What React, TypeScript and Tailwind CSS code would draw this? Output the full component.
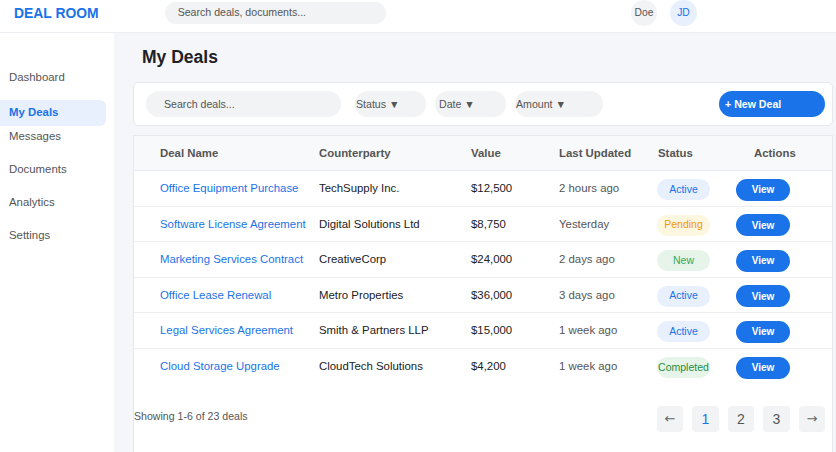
import React from "react";

type Row = { name: string; cp: string; value: string; updated: string; status: "Active" | "Pending" | "New" | "Completed" };

const rows: Row[] = [
  { name: "Office Equipment Purchase", cp: "TechSupply Inc.", value: "$12,500", updated: "2 hours ago", status: "Active" },
  { name: "Software License Agreement", cp: "Digital Solutions Ltd", value: "$8,750", updated: "Yesterday", status: "Pending" },
  { name: "Marketing Services Contract", cp: "CreativeCorp", value: "$24,000", updated: "2 days ago", status: "New" },
  { name: "Office Lease Renewal", cp: "Metro Properties", value: "$36,000", updated: "3 days ago", status: "Active" },
  { name: "Legal Services Agreement", cp: "Smith & Partners LLP", value: "$15,000", updated: "1 week ago", status: "Active" },
  { name: "Cloud Storage Upgrade", cp: "CloudTech Solutions", value: "$4,200", updated: "1 week ago", status: "Completed" },
];

function Badge({ status }: { status: Row["status"] }) {
  const cls =
    status === "Active"
      ? "bg-[#e8f0fe] text-[#1a73e8]"
      : status === "Pending"
      ? "bg-[#fef7e0] text-[#f29900]"
      : status === "New"
      ? "bg-[#e6f4ea] text-[#34a853]"
      : "bg-[#e6f4ea] text-[#1e8e3e]";
  return (
    <span className={`mt-[3px] inline-flex h-[21px] w-[53px] items-center justify-center whitespace-nowrap rounded-full text-[10.5px] ${cls}`}>
      {status}
    </span>
  );
}

export default function App() {
  const nav = ["Dashboard", "My Deals", "Messages", "Documents", "Analytics", "Settings"];
  return (
    <div className="min-h-screen w-[836px] bg-white text-[#202124]" style={{ fontFamily: '"Liberation Sans", Arial, sans-serif' }}>
      {/* Header */}
      <div className="border-b border-[#eceef1] pb-[6px]">
        <div className="flex h-[26px] items-center pl-[14px] pr-[139px]">
          <div className="text-[13.9px] font-bold text-[#1a73e8]">DEAL ROOM</div>
          <div className="ml-[66px] flex h-[22px] w-[221px] items-center rounded-full bg-[#f1f3f4] pl-[13px] text-[10.6px] text-[#555]">
            Search deals, documents...
          </div>
          <div className="ml-auto flex items-center gap-[13px]">
            <div className="flex h-[26px] w-[26px] items-center justify-center rounded-full bg-[#f1f3f4] text-[10.3px] text-[#555]">Doe</div>
            <div className="flex h-[26px] w-[27px] items-center justify-center rounded-full bg-[#e8f0fe] text-[10.3px] text-[#1a73e8]">JD</div>
          </div>
        </div>
      </div>

      <div className="flex min-h-[420px]">
        {/* Sidebar */}
        <div className="w-[114px] shrink-0 bg-white pr-[8px] pt-[34px]">
          {nav.map((n) => {
            const active = n === "My Deals";
            return active ? (
              <div key={n} className="flex h-[26px] items-center rounded-r-[6px] bg-[#e8f0fe] pl-[9px] text-[11.4px] font-bold text-[#1a73e8]">
                {n}
              </div>
            ) : (
              <div key={n} className="mb-[13px] flex h-[20px] items-center pl-[9px] pt-[2px] text-[11.4px] text-[#555]">
                {n}
              </div>
            );
          })}
        </div>

        {/* Main */}
        <div className="flex-1 bg-[#f5f6fa] pl-[19px] pr-[3px] pt-[12px]">
          <h1 className="mb-[13px] pl-[9px] text-[17.5px] font-bold leading-[24px] text-[#202124]">My Deals</h1>

          {/* Filters */}
          <div className="flex items-center rounded-[5px] border border-[#e6e8ec] bg-white py-[8px] pl-[12px] pr-[7px]">
            <div className="flex h-[26px] w-[195px] items-center rounded-full bg-[#f1f3f4] pl-[18px] pt-[1px] text-[10.6px] text-[#555]">
              Search deals...
            </div>
            <div className="ml-[14px] flex h-[26px] w-[71px] items-center rounded-full bg-[#f1f3f4] pl-[1px] pt-[2px] text-[10.6px] text-[#555]">
              Status ▼
            </div>
            <div className="ml-[9px] flex h-[26px] w-[71px] items-center rounded-full bg-[#f1f3f4] pl-[4px] pt-[2px] text-[10.6px] text-[#555]">
              Date ▼
            </div>
            <div className="ml-[9px] flex h-[26px] w-[88px] items-center rounded-full bg-[#f1f3f4] pl-[1px] pt-[2px] text-[10.6px] text-[#555]">
              Amount ▼
            </div>
            <div className="ml-auto flex h-[26px] w-[106px] items-center rounded-full bg-[#1a73e8] pl-[6px] pt-[1px] text-[10.6px] font-bold text-white">
              + New Deal
            </div>
          </div>

          {/* Table card */}
          <div className="mt-[9px] border border-[#e6e8ec] bg-white pb-[40px]">
            <div className="grid h-[35px] grid-cols-[159px_152px_88px_98px_79px_1fr] items-center border-b border-[#e8eaed] bg-[#f8f9fa] pl-[26px] pt-[1px] text-[11.4px] font-bold text-[#555]">
              <div>Deal Name</div>
              <div>Counterparty</div>
              <div>Value</div>
              <div>Last Updated</div>
              <div className="pl-[1px]">Status</div>
              <div className="pl-[18px]">Actions</div>
            </div>
            {rows.map((r, i) => (
              <div
                key={r.name}
                className={`grid h-[35.5px] grid-cols-[159px_152px_88px_98px_79px_1fr] items-center pl-[26px] text-[11.4px] ${
                  i < rows.length - 1 ? "border-b border-[#eeeff1]" : ""
                }`}
              >
                <div className="whitespace-nowrap pt-[1px] text-[#1a73e8]">{r.name}</div>
                <div className="whitespace-nowrap pt-[1px] text-[#202124]">{r.cp}</div>
                <div className="pt-[1px] text-[#202124]">{r.value}</div>
                <div className="pt-[1px] text-[#555]">{r.updated}</div>
                <div>
                  <Badge status={r.status} />
                </div>
                <div>
                  <span className="mt-[3px] inline-flex h-[22px] w-[54px] items-center justify-center rounded-full bg-[#1a73e8] text-[10px] font-bold text-white">
                    View
                  </span>
                </div>
              </div>
            ))}

            {/* Footer */}
            <div className="flex items-start justify-between pr-[7px] pt-[22px]">
              <div className="mt-[1.5px] text-[10.6px] leading-[16px] text-[#555]">Showing 1-6 of 23 deals</div>
              <div className="flex gap-[9px] text-[14px]">
                <div className="flex h-[26px] w-[26px] items-center justify-center rounded-[4px] bg-[#f1f3f4] text-[13px] text-[#666]" style={{ fontFamily: '"DejaVu Sans", sans-serif' }}>←</div>
                <div className="flex h-[26px] w-[27px] items-center justify-center rounded-[4px] bg-[#f1f3f4] text-[#1a73e8]">1</div>
                <div className="flex h-[26px] w-[26px] items-center justify-center rounded-[4px] bg-[#f1f3f4] text-[#555]">2</div>
                <div className="flex h-[26px] w-[27px] items-center justify-center rounded-[4px] bg-[#f1f3f4] text-[#555]">3</div>
                <div className="flex h-[26px] w-[26px] items-center justify-center rounded-[4px] bg-[#f1f3f4] text-[13px] text-[#666]" style={{ fontFamily: '"DejaVu Sans", sans-serif' }}>→</div>
              </div>
            </div>
          </div>
        </div>
      </div>
    </div>
  );
}
